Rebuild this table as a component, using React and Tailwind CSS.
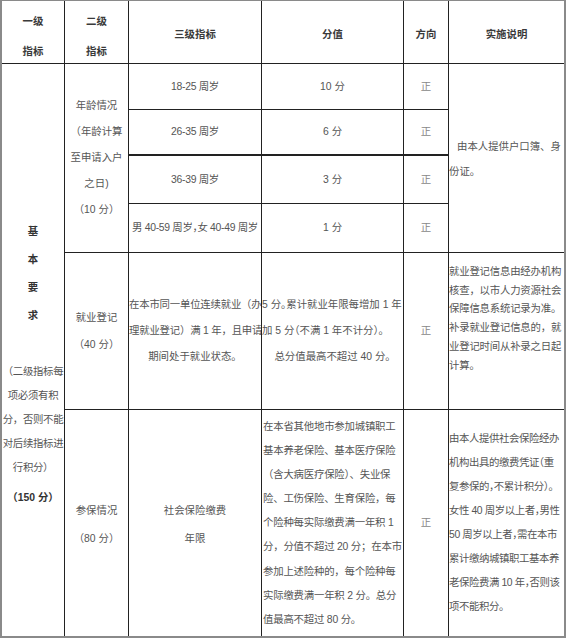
const font = { fontFamily: '"Liberation Sans", "Noto Sans CJK SC", sans-serif' };

const B = "border-[#222]";

const Cell = ({ className = "", children }) => (
  <div className={`${B} ${className}`}>{children}</div>
);

const Lines = ({ lines, className = "" }) => (
  <div className={className}>
    {lines.map((l, i) => (
      <div key={i} className="whitespace-nowrap">
        {l}
      </div>
    ))}
  </div>
);

const ageRows = [
  { age: "18-25 周岁", score: "10 分", line: "border-b" },
  { age: "26-35 周岁", score: "6 分", line: "border-b-2" },
  { age: "36-39 周岁", score: "3 分", line: "border-b" },
  { age: "男 40-59 周岁，女 40-49 周岁", score: "1 分", line: "border-b" },
];

export default function App() {
  return (
    <div className="w-[567px] h-[640px] bg-white text-[10.4px] text-[#555]" style={font}>
      <div className="grid grid-cols-[63px_64px_133px_142px_45px_115px] grid-rows-[63px_46px_46px_48px_49px_157px_226px] w-[566px] border-l-2 border-t border-r-2 border-b-2 border-[#8a8a8a]">
        {/* header */}
        <Cell className="border-r border-b flex flex-col items-center pt-[6px] leading-[30px] font-bold text-[#3a3a3a]">
          <div>一级</div>
          <div>指标</div>
        </Cell>
        <Cell className="border-r border-b flex flex-col items-center pt-[6px] leading-[30px] font-bold text-[#3a3a3a]">
          <div>二级</div>
          <div>指标</div>
        </Cell>
        <Cell className="border-r border-b flex items-center justify-center pt-[6px] font-bold text-[#3a3a3a]">三级指标</Cell>
        <Cell className="border-r border-b flex items-center justify-center pt-[6px] font-bold text-[#3a3a3a]">分值</Cell>
        <Cell className="border-r border-b flex items-center justify-center pt-[6px] font-bold text-[#3a3a3a]">方向</Cell>
        <Cell className="border-b flex items-center justify-center pt-[6px] font-bold text-[#3a3a3a]">实施说明</Cell>

        {/* 一级指标 */}
        <Cell className="col-start-1 row-start-2 row-span-6 border-r flex flex-col items-center pt-[154px]">
          <div className="font-bold text-[#333] leading-[28px] flex flex-col items-center">
            <div>基</div>
            <div>本</div>
            <div>要</div>
            <div>求</div>
          </div>
          <Lines
            className="mt-[30px] leading-[24px] flex flex-col items-center tracking-[-0.3px]"
            lines={["（二级指标每", "项必须有积", "分，否则不能", "对后续指标进", "行积分）"]}
          />
          <div className="mt-[6px] leading-[24px] font-bold text-[#333]">（150 分）</div>
        </Cell>

        {/* 年龄情况 */}
        <Cell className="col-start-2 row-start-2 row-span-4 border-r border-b flex items-center justify-center">
          <Lines
            className="leading-[26px] flex flex-col items-center"
            lines={["年龄情况", "（年龄计算", "至申请入户", "之日)", "（10 分）"]}
          />
        </Cell>

        {ageRows.map((r, i) => (
          <div key={i} className="contents">
            <Cell className={`col-start-3 row-start-${i + 2} border-r ${r.line} flex items-center justify-center whitespace-nowrap tracking-[-0.3px] [font-feature-settings:'halt'] overflow-hidden`}>
              {r.age}
            </Cell>
            <Cell className={`col-start-4 border-r ${r.line} flex items-center justify-center`}>{r.score}</Cell>
            <Cell className={`col-start-5 border-r ${r.line} flex items-center justify-center text-[#888]`}>正</Cell>
          </div>
        ))}

        <Cell className="col-start-6 row-start-2 row-span-4 border-b flex flex-col justify-center leading-[25px] pt-[2px]">
          <div className="pl-[8px] whitespace-nowrap">由本人提供户口簿、身</div>
          <div>份证。</div>
        </Cell>

        {/* 就业登记 */}
        <Cell className="col-start-2 row-start-6 border-r border-b flex items-center justify-center">
          <Lines className="leading-[27px] flex flex-col items-center" lines={["就业登记", "（40 分）"]} />
        </Cell>
        <Cell className="col-start-3 row-start-6 border-r border-b flex flex-col justify-center leading-[26px] overflow-hidden">
          <div className="whitespace-nowrap tracking-[-0.2px]">在本市同一单位连续就业（办</div>
          <div className="whitespace-nowrap tracking-[-0.2px]">理就业登记）满 1 年，且申请</div>
          <div className="text-center">期间处于就业状态。</div>
        </Cell>
        <Cell className="col-start-4 row-start-6 border-r border-b flex flex-col justify-center leading-[26px] overflow-hidden [font-feature-settings:'halt']">
          <div className="whitespace-nowrap">5 分。累计就业年限每增加 1 年</div>
          <div className="whitespace-nowrap">加 5 分（不满 1 年不计分）。</div>
          <div className="text-center">总分值最高不超过 40 分。</div>
        </Cell>
        <Cell className="col-start-5 row-start-6 border-r border-b flex items-center justify-center text-[#888]">正</Cell>
        <Cell className="col-start-6 row-start-6 border-b pt-[10px] leading-[18.7px] overflow-hidden">
          <Lines
            className="tracking-[-0.2px]"
            lines={["就业登记信息由经办机构", "核查，以市人力资源社会", "保障信息系统记录为准。", "补录就业登记信息的，就", "业登记时间从补录之日起", "计算。"]}
          />
        </Cell>

        {/* 参保情况 */}
        <Cell className="col-start-2 row-start-7 border-r flex items-center justify-center pt-[4px]">
          <Lines className="leading-[28px] flex flex-col items-center" lines={["参保情况", "（80 分）"]} />
        </Cell>
        <Cell className="col-start-3 row-start-7 border-r flex items-center justify-center pt-[4px]">
          <Lines className="leading-[28px] flex flex-col items-center" lines={["社会保险缴费", "年限"]} />
        </Cell>
        <Cell className="col-start-4 row-start-7 border-r pt-[5px] pl-[1px] leading-[24.1px] overflow-hidden tracking-[-0.2px]">
          <Lines
            lines={[
              "在本省其他地市参加城镇职工",
              "基本养老保险、基本医疗保险",
              "（含大病医疗保险）、失业保",
              "险、工伤保险、生育保险，每",
              "个险种每实际缴费满一年积 1",
              "分，分值不超过 20 分；在本市",
              "参加上述险种的，每个险种每",
              "实际缴费满一年积 2 分。总分",
              "值最高不超过 80 分。",
            ]}
          />
        </Cell>
        <Cell className="col-start-5 row-start-7 border-r flex items-center justify-center text-[#888]">正</Cell>
        <Cell className="col-start-6 row-start-7 flex flex-col justify-center leading-[24px] overflow-hidden">
          <Lines
            className="tracking-[-0.4px] [font-feature-settings:'halt']"
            lines={[
              "由本人提供社会保险经办",
              "机构出具的缴费凭证（重",
              "复参保的，不累计积分）。",
              "女性 40 周岁以上者，男性",
              "50 周岁以上者，需在本市",
              "累计缴纳城镇职工基本养",
              "老保险费满 10 年，否则该",
              "项不能积分。",
            ]}
          />
        </Cell>
      </div>
    </div>
  );
}
